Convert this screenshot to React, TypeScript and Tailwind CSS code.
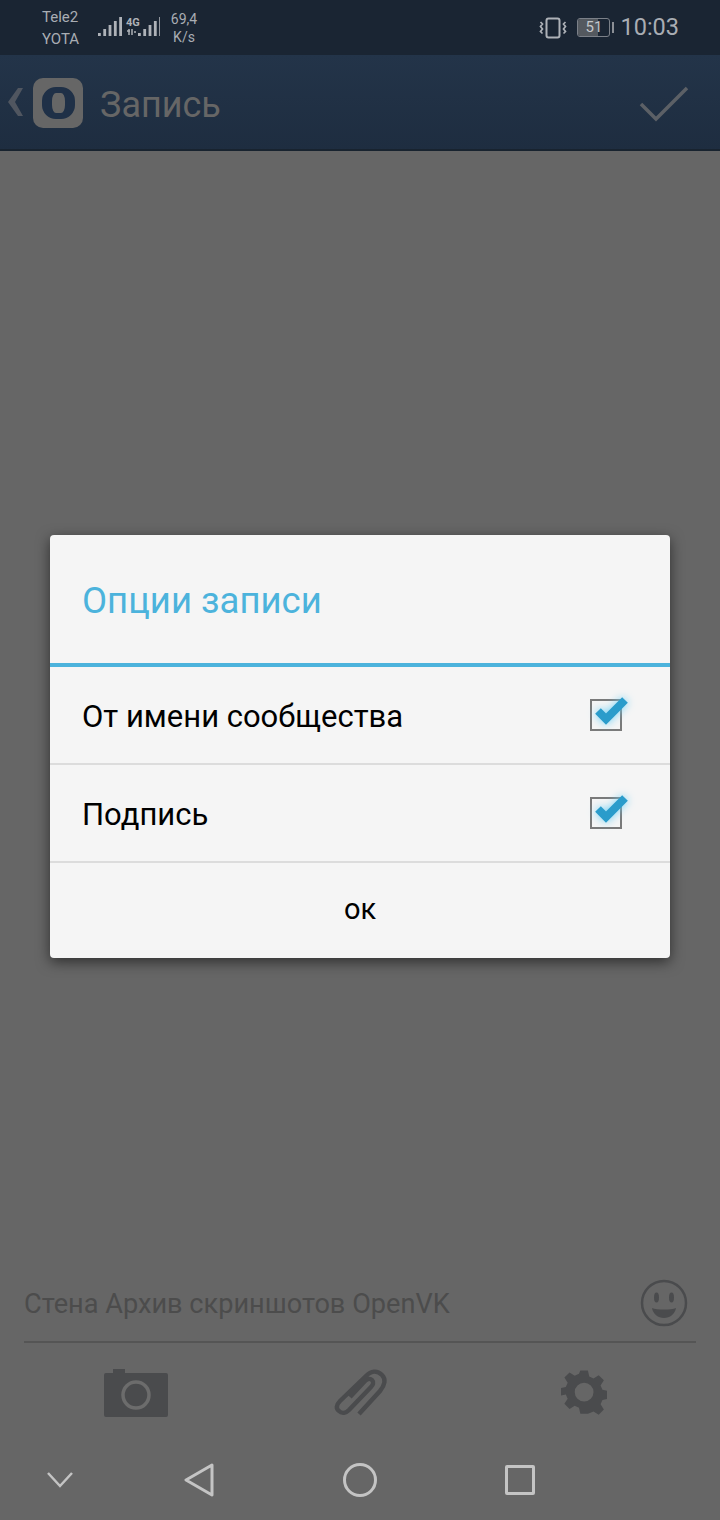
function SignalBars({ x = 0 }: { x?: number }) {
  const bars = [3, 7, 11, 15, 19];
  return (
    <>
      {bars.map((h, i) => (
        <rect key={i} x={x + i * 5.3} y={19 - h} width={2.8} height={h} fill="#aeb2b8" />
      ))}
    </>
  );
}

function StatusBar() {
  return (
    <div className="flex h-[55px] shrink-0 items-center bg-[#1a2533] pl-[42px] pr-[41px] text-[#a9adb3]">
      <div className="flex w-[56px] flex-col text-[15px] leading-[22px]">
        <span>Tele2</span>
        <span>YOTA</span>
      </div>
      <svg width="62" height="22" viewBox="0 0 62 22" className="mt-[1px]">
        <SignalBars />
        <text x="28" y="9" fontSize="11" fontWeight="700" fill="#aeb2b8" fontFamily="Roboto, sans-serif">4G</text>
        <path d="M29 14h3M31 12v6M34 12v6M36 15h2" stroke="#aeb2b8" strokeWidth="1.5" fill="none" />
        <SignalBars x={40} />
      </svg>
      <div className="ml-[10px] flex w-[28px] flex-col items-center text-[14px] leading-[18px]">
        <span>69,4</span>
        <span>K/s</span>
      </div>
      <div className="ml-auto flex items-center">
        <svg width="28" height="22" viewBox="0 0 28 22" fill="none" stroke="#aeb2b8">
          <rect x="7.500" y="1.500" width="13" height="19" rx="2" strokeWidth="2" />
          <path d="M1.500 5l2 2-2 2.500 2 2.500-2 2.500 2 2M26.500 5l-2 2 2 2.500-2 2.500 2 2.500-2 2" strokeWidth="1.700" />
        </svg>
        <div className="relative ml-[10px] flex h-[19px] w-[33px] items-center justify-center overflow-hidden rounded-[3px] border border-[#7b8088] text-[15px] leading-none text-[#c4c7cb]">
          <div className="absolute inset-y-0 left-0 w-[20px] bg-[#54595f]" />
          <span className="relative">51</span>
        </div>
        <div className="ml-[2px] h-[11px] w-[2px] bg-[#8b8f95]" />
        <span className="ml-[6px] mt-[1px] text-[23.5px] leading-none">10:03</span>
      </div>
    </div>
  );
}

function Header() {
  return (
    <div className="flex h-[96px] shrink-0 items-center border-b-2 border-[#18232f] bg-gradient-to-b from-[#233449] to-[#1e2d40] pl-[8px] pr-[31px]">
      <svg width="15" height="28" viewBox="0 0 15 28" className="mt-[-1px]">
        <path d="M15 0H10L0 14l10 14h5L7 14z" fill="#505660" />
      </svg>
      <div className="ml-[10px] mt-[2px] flex h-[50px] w-[50px] items-center justify-center rounded-[10px] bg-[#666666]">
        <div className="h-[32px] w-[33px] rounded-[14px] border-x-[10px] border-y-[6px] border-[#1f3047]" />
      </div>
      <span className="ml-[17px] mt-[6px] text-[36px] leading-none text-[#666666]">Запись</span>
      <svg width="50" height="36" viewBox="0 0 50 36" className="ml-auto mt-[3px]" fill="none" stroke="#5c6066" strokeWidth="3.500">
        <path d="M2 18l15 15L48 2" />
      </svg>
    </div>
  );
}

function CheckBox() {
  return (
    <div className="relative h-[32px] w-[32px] border-2 border-[#7a7a7a]">
      <svg width="44" height="38" viewBox="0 0 44 38" className="absolute left-[-2px] top-[-12px] drop-shadow-[0_0_4px_#6fd0f5]">
        <path d="M8 22l8 8L35 11" stroke="#2a9ccb" strokeWidth="8" fill="none" />
      </svg>
    </div>
  );
}

function OptionRow({ label }: { label: string }) {
  return (
    <div className="flex h-[98px] items-center justify-between border-b-2 border-[#dcdcdc] pl-[32px] pr-[48px]">
      <span className="mt-[3px] text-[31px] leading-none text-black">{label}</span>
      <CheckBox />
    </div>
  );
}

function OptionsDialog() {
  return (
    <div className="absolute left-[50px] top-[535px] w-[620px] overflow-hidden rounded-[4px] bg-[#f5f5f5] shadow-[0_4px_14px_rgba(0,0,0,0.55)]">
      <div className="flex h-[128px] items-center pl-[32px] pt-[4px] text-[36.500px] leading-none text-[#4cb3dc]">Опции записи</div>
      <div className="h-[4px] bg-[#4cb3dc]" />
      <OptionRow label="От имени сообщества" />
      <OptionRow label="Подпись" />
      <div className="flex h-[95px] items-center justify-center pb-[2px] text-[29px] leading-none text-black">ок</div>
    </div>
  );
}

function Composer() {
  return (
    <div className="shrink-0 px-[24px]">
      <div className="flex h-[64px] items-center justify-between pb-[12px]">
        <span className="mt-[3px] text-[27.150px] leading-none text-[#4c4c4c]">Стена Архив скриншотов OpenVK</span>
        <svg width="48" height="48" viewBox="0 0 48 48" className="mr-[8px]">
          <circle cx="24" cy="24" r="22" fill="none" stroke="#4a4b4d" strokeWidth="2.500" />
          <ellipse cx="16.500" cy="18.500" rx="2.500" ry="5" fill="#4a4b4d" />
          <ellipse cx="31.500" cy="18.500" rx="2.500" ry="5" fill="#4a4b4d" />
          <path d="M12 29c5 2 19 2 24 0-1 6-6 10-12 10s-11-4-12-10z" fill="#4a4b4d" />
        </svg>
      </div>
      <div className="h-[2px] bg-[#555555]" />
      <div className="flex h-[97px] items-center">
        <svg width="64" height="48" viewBox="0 0 64 48" className="ml-[80px] mt-[2px]">
          <path d="M9 0h12v4h41a2 2 0 0 1 2 2v40a2 2 0 0 1-2 2H2a2 2 0 0 1-2-2V6a2 2 0 0 1 2-2h7z" fill="#4a4b4d" />
          <circle cx="32" cy="26" r="13" fill="none" stroke="#6c6c6c" strokeWidth="3.500" />
        </svg>
        <svg width="56" height="50" viewBox="0 0 56 50" className="ml-[165px]" fill="none" stroke="#4a4b4d" strokeWidth="4.500">
          <path d="M26 47L47 24c5-6 6-12 2-16-5-5-11-4-16 1L7 34c-4 4-4 8-1 10 3 3 7 2 10-1L38 20c2-2 3-5 1-7s-5-1-7 1L17 30" />
        </svg>
        <svg width="46" height="46" viewBox="0 0 46 46" className="ml-[172px]">
          <path fill="#4a4b4d" fillRule="evenodd" d="M19 0h8l1.500 6.500 4.500 2 5.500-3.500 5.500 5.500-3.500 5.500 2 4.500 6.500 1.500v8l-6.500 1.500-2 4.500 3.500 5.500-5.500 5.500-5.500-3.500-4.500 2L27 46h-8l-1.500-6.500-4.500-2-5.500 3.500-5.500-5.500 3.500-5.500-2-4.500L-3 27v-8l6.500-1.500 2-4.500L2 7.500 7.500 2 13 5.500l4.500-2zM23 13a10 10 0 1 0 0 20 10 10 0 0 0 0-20z" transform="translate(1.500 1.500) scale(0.94)" />
        </svg>
      </div>
    </div>
  );
}

function NavBar() {
  return (
    <div className="flex h-[80px] shrink-0 items-center pl-[47px]">
      <svg width="26" height="16" viewBox="0 0 26 16" fill="none" stroke="#c4c4c4" strokeWidth="2.500">
        <path d="M1 1l12 13L25 1" />
      </svg>
      <svg width="30" height="34" viewBox="0 0 30 34" className="ml-[111px]" fill="none" stroke="#c4c4c4" strokeWidth="3" strokeLinejoin="round">
        <path d="M28 2L2 17l26 15z" />
      </svg>
      <svg width="34" height="34" viewBox="0 0 34 34" className="ml-[129px]" fill="none" stroke="#c4c4c4" strokeWidth="3">
        <circle cx="17" cy="17" r="15.500" />
      </svg>
      <div className="ml-[128px] h-[30px] w-[30px] rounded-[2px] border-[3px] border-[#c4c4c4]" />
    </div>
  );
}

export default function App() {
  return (
    <div className="relative flex h-[1520px] w-[720px] flex-col overflow-hidden bg-[#666666] font-['Roboto',sans-serif]">
      <StatusBar />
      <Header />
      <div className="flex-1" />
      <Composer />
      <NavBar />
      <OptionsDialog />
    </div>
  );
}
